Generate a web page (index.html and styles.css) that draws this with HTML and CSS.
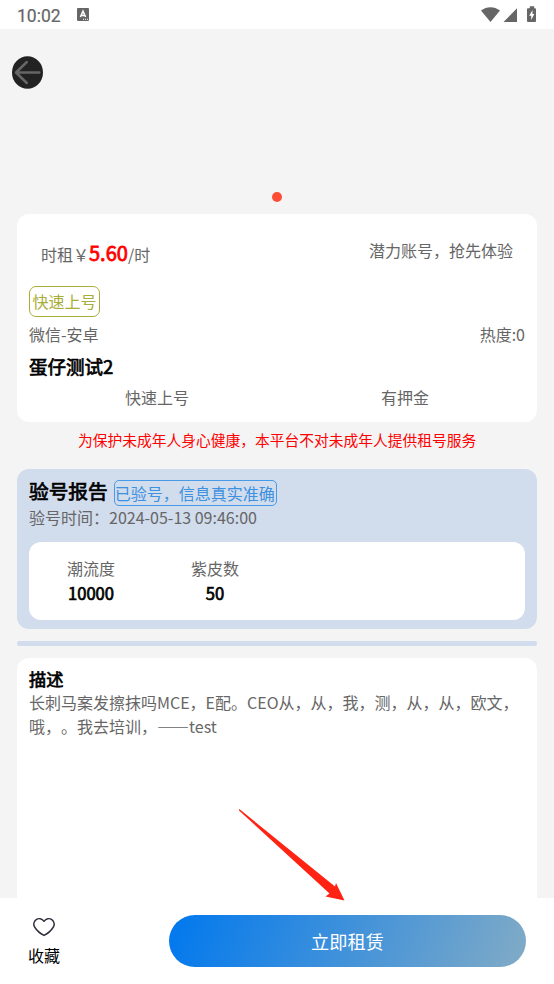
FILE: index.html
```html
<!DOCTYPE html>
<html lang="zh-CN">
<head>
<meta charset="utf-8">
<title>蛋仔测试2</title>
<link rel="stylesheet" href="styles.css">
</head>
<body>
<div class="app">
  <header class="status">
    <span class="clock">10:02</span>
    <svg class="ime" width="12" height="13" viewBox="0 0 12 13"><rect width="12" height="13" rx="1" fill="#666"/><path d="M3.4 9 6 3.2 8.6 9M4.3 7.4h3.4" fill="none" stroke="#fff" stroke-width="1.5"/><path d="M6 11.3h1M8 11.3h1M10 11.3h1" stroke="#fff"/></svg>
    <svg class="system" width="58" height="18" viewBox="0 0 58 18" fill="#666"><path d="M0 4.6C5.6.1 13.4.1 19 4.6L9.5 16Z"/><path d="M22.5 16 36 2.3V16Z"/><path fill-rule="evenodd" d="M46 3.2q0-1 1-1h1.8V.2h4.4v2H54q1 0 1 1V15q0 1-1 1h-7q-1 0-1-1ZM51.5 4 48.2 9.8h2V14l3.1-6h-1.8Z"/></svg>
  </header>
  <section class="hero">
    <svg class="back" width="31" height="33" viewBox="0 0 31 33"><ellipse cx="15.5" cy="16.5" rx="15.5" ry="16.3" fill="#222"/><path d="M14.8 6 4 16.5 14.8 27M4.3 16.5h23" fill="none" stroke="#666" stroke-width="2.5" stroke-linecap="round" stroke-linejoin="round"/></svg>
    <span class="dot"></span>
  </section>
  <main class="content">
    <section class="card product">
      <div class="price-row">
        <div class="rate">时租￥<b>5.60</b>/时</div>
        <div class="slogan">潜力账号，抢先体验</div>
      </div>
      <span class="badge">快速上号</span>
      <div class="meta"><span>微信-安卓</span><span>热度:0</span></div>
      <h1>蛋仔测试2</h1>
      <div class="features"><span>快速上号</span><span>有押金</span></div>
    </section>
    <p class="notice">为保护未成年人身心健康，本平台不对未成年人提供租号服务</p>
    <section class="report">
      <div class="report-head"><h2>验号报告</h2><span class="verified">已验号，信息真实准确</span></div>
      <p class="time">验号时间：2024-05-13 09:46:00</p>
      <div class="stats">
        <div class="stat"><span>潮流度</span><strong>10000</strong></div>
        <div class="stat"><span>紫皮数</span><strong>50</strong></div>
      </div>
    </section>
    <div class="bar"></div>
    <section class="card description">
      <h3>描述</h3>
      <p>长刺马案发擦抹吗MCE，E配。CEO从，从，我，测，从，从，欧文，<br>哦，。我去培训，——test</p>
    </section>
  </main>
  <footer class="footer">
    <div class="favorite">
      <svg width="24" height="22" viewBox="0 0 24 22"><path d="M12 4.5C9.8 1.4 6.3.9 3.8 2.8 1.1 4.9.8 8.3 2.5 11c2 3.2 5.8 6.4 9.5 8.3 3.7-1.9 7.5-5.1 9.5-8.3 1.7-2.7 1.4-6.1-1.3-8.2C17.7.9 14.2 1.4 12 4.5Z" fill="none" stroke="#302d3d" stroke-width="1.5" stroke-linejoin="round"/></svg>
      <span>收藏</span>
    </div>
    <button class="rent">立即租赁</button>
  </footer>
  <svg class="pointer" width="108" height="94" viewBox="0 0 108 94"><path d="M1.3 1 97 78.500 98 75 106.500 92.500 87.500 88.500 91.500 85.500 1 2.500Z" fill="#ff2314"/></svg>
</div>
</body>
</html>
```
FILE: styles.css
```css
* { box-sizing: border-box; }
body { margin: 0; background: #f4f4f4; color: #666; font: 16px/24px "Noto Sans CJK SC", sans-serif; text-spacing-trim: space-all; }
h1, h2, h3, p { margin: 0; font-weight: 400; }
h1, h2, h3, strong { color: #000; font-weight: 400; -webkit-text-stroke: .7px #000; }
.app { position: relative; height: 984px; display: flex; flex-direction: column; overflow: hidden; }
.status { height: 29px; flex: none; display: flex; align-items: center; padding: 0 15px 0 17px; background: #fff; }
.clock { font: 400 17.5px/29px Roboto, sans-serif; padding-top: 3px; -webkit-text-stroke: .2px #666; }
.ime { margin-left: 16px; }
.system { margin-left: auto; margin-top: 1px; }
.hero { height: 185px; flex: none; display: flex; flex-direction: column; justify-content: space-between; padding: 27px 12px 12px; }
.dot { width: 10px; height: 10px; border-radius: 50%; background: #ff4d35; align-self: center; }
.content { flex: 1; min-height: 0; display: flex; flex-direction: column; padding: 0 17px; }
.card { background: #fff; border-radius: 12px; padding: 0 12px; }
.product { height: 208px; flex: none; padding-top: 24px; }
.price-row { display: flex; justify-content: space-between; height: 48px; padding: 0 12px; }
.rate { line-height: 30px; }
.rate b { color: #f00; font-size: 20px; font-weight: 400; -webkit-text-stroke: .8px #f00; }
.badge { display: block; width: 71px; height: 31px; border: 1.5px solid #aaad38; border-radius: 7px; color: #aaad38; text-align: center; line-height: 29px; }
.meta { display: flex; justify-content: space-between; margin-top: 5px; }
h1 { font-size: 18.5px; line-height: 30px; margin-top: 5px; }
.features { display: grid; grid-template-columns: 1fr 1fr; margin: 4px -4px 0 4px; text-align: center; }
.notice { flex: none; color: #f00; font-size: 14.75px; line-height: 35px; height: 47px; text-align: center; }
.report { flex: none; height: 160px; border-radius: 12px; background: #d1dced; padding: 8px 12px; }
.report-head { display: flex; align-items: flex-start; gap: 6px; height: 28px; }
h2 { font-size: 19.7px; line-height: 28px; }
.verified { width: 163px; height: 26px; margin-top: 3px; border: 1px solid #499ae6; border-radius: 5px; color: #3d91df; line-height: 24px; text-indent: -1px; text-align: center; white-space: nowrap; }
.stats { display: grid; grid-template-columns: repeat(4, 1fr); height: 78px; margin-top: 13px; padding-top: 14px; border-radius: 12px; background: #fff; }
.stat { display: flex; flex-direction: column; text-align: center; }
.stat strong { font-size: 16.6px; line-height: 26px; }
.bar { flex: none; height: 5px; margin: 12px 0; border-radius: 2px; background: #d1dced; }
.description { flex: 1; border-radius: 12px 12px 0 0; padding-top: 8px; }
h3 { font-size: 17.2px; line-height: 26px; }
.description p { white-space: nowrap; line-height: 23.5px; margin-top: -1px; }
.footer { flex: none; height: 86px; display: flex; justify-content: space-between; background: #fff; padding: 17px 28px; }
.favorite { display: flex; flex-direction: column; align-items: center; color: #000; }
.favorite svg { margin-top: 2px; }
.favorite span { margin-top: 5px; }
.rent { width: 357px; height: 52px; border: 0; border-radius: 26px; background: linear-gradient(110deg, #0078ee, #81abc6); color: #fff; font: 18.2px/52px "Noto Sans CJK SC", sans-serif; padding: 0; }
.pointer { position: absolute; left: 238px; top: 808px; }
```
